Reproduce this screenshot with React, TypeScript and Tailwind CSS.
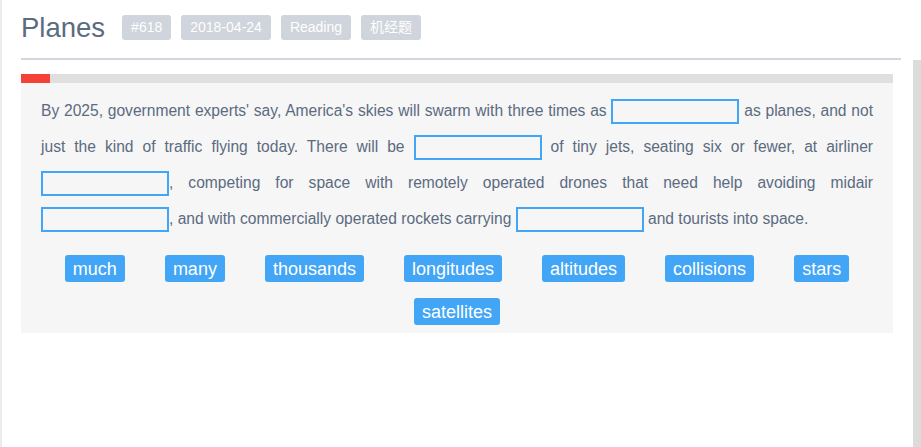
const words = ['much', 'many', 'thousands', 'longitudes', 'altitudes', 'collisions', 'stars', 'satellites'];

function Blank() {
  return (
    <span className="inline-block w-[128px] h-[25px] align-middle border-2 border-[#42a5f5] bg-[#f6f6f6]" />
  );
}

export default function App() {
  return (
    <div
      className="flex w-[921px] h-[447px] border-l-2 border-[#ececec] bg-white overflow-hidden"
      style={{ fontFamily: '"Liberation Sans", Arial, "Noto Sans CJK SC", sans-serif' }}
    >
      <div className="flex-1 pl-[19px]">
        <div className="flex items-center h-[58px] pb-[3px]">
          <h1 className="text-[27.5px] text-[#5b6b80] leading-none mr-[17px]">Planes</h1>
          <div className="flex gap-[10px]">
            {['#618', '2018-04-24', 'Reading', '机经题'].map((t) => (
              <span
                key={t}
                className="h-[25px] px-[9px] flex items-center rounded-[3px] bg-[#d0d4dc] text-white text-[14px]"
              >
                {t}
              </span>
            ))}
          </div>
        </div>
        <div className="w-[880px] h-[2px] bg-[#d4d6dd]" />

        <div className="w-[872px] mt-[14px]">
          <div className="h-[9px] bg-[#dfdfdf]">
            <div className="h-full w-[29px] bg-[#f44336]" />
          </div>
          <div className="bg-[#f6f6f6] px-[20px] pt-[10px] pb-[8px]">
            <p className="text-[15.6px] leading-[36px] text-[#5b6b80] text-justify">
              By 2025, government experts' say, America's skies will swarm with three times as <Blank /> as planes, and not
              just the kind of traffic flying today. There will be <Blank /> of tiny jets, seating six or fewer, at airliner{' '}
              <Blank />, competing for space with remotely operated drones that need help avoiding midair <Blank />, and
              with commercially operated rockets carrying <Blank /> and tourists into space.
            </p>
            <div className="flex flex-wrap justify-center gap-x-10 gap-y-4 mt-[18px]">
              {words.map((w) => (
                <button
                  key={w}
                  className="h-[27px] px-[8px] rounded-[3px] bg-[#42a5f5] text-white text-[18px] leading-none"
                >
                  {w}
                </button>
              ))}
            </div>
          </div>
        </div>
      </div>
      <div className="w-[8px] mt-[60px] bg-[#dcdcdc]" />
    </div>
  );
}
